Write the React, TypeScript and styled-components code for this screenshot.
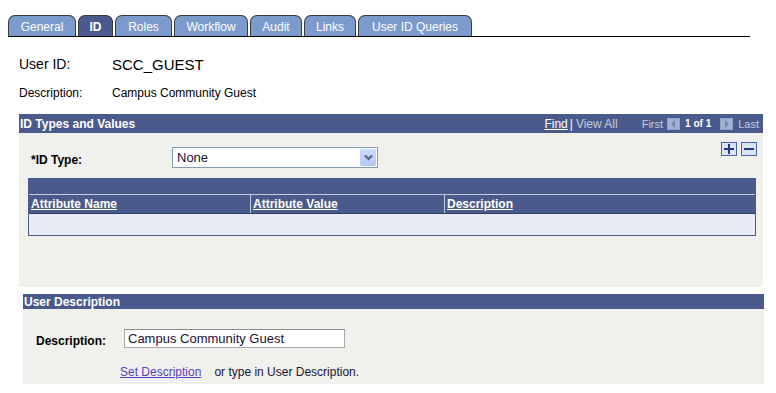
import React from "react";
import styled, { createGlobalStyle } from "styled-components";

const GlobalStyle = createGlobalStyle`
  body {
    margin: 0;
    background: #ffffff;
    font-family: "Liberation Sans", Arial, sans-serif;
    font-size: 12px;
    color: #000;
  }
`;

const HEADER_BLUE = "#4a5a8c";
const PANEL_BG = "#f0f1ec";

const Page = styled.div`
  width: 776px;
  height: 393px;
  overflow: hidden;
`;

const TabBar = styled.div`
  display: flex;
  gap: 2px;
  margin: 15px 0 0 8px;
  width: 742px;
  border-bottom: 1px solid #000;
`;

const Tab = styled.div<{ $active?: boolean; $w: number }>`
  width: ${(p) => p.$w}px;
  height: 21px;
  box-sizing: border-box;
  display: flex;
  align-items: center;
  justify-content: center;
  background: ${(p) => (p.$active ? HEADER_BLUE : "#7b9bcd")};
  color: #fff;
  font-size: 12px;
  font-weight: ${(p) => (p.$active ? "bold" : "normal")};
  border: 1px solid #3a3a3a;
  border-bottom: none;
  border-radius: 7px 7px 0 0;
  padding-top: 1px;
`;

const InfoRow = styled.div<{ $h: number; $top: number }>`
  display: flex;
  align-items: center;
  height: ${(p) => p.$h}px;
  margin: ${(p) => p.$top}px 0 0 19px;
`;

const InfoLabel = styled.span<{ $size: number }>`
  width: 93px;
  font-size: ${(p) => p.$size}px;
  color: #000;
`;

const InfoValue = styled.span<{ $size: number }>`
  font-size: ${(p) => p.$size}px;
  color: #000;
`;

const Section = styled.div<{ $left: number; $w: number; $top: number }>`
  margin: ${(p) => p.$top}px 0 0 ${(p) => p.$left}px;
  width: ${(p) => p.$w}px;
`;

const SectionHeader = styled.div<{ $h: number }>`
  height: ${(p) => p.$h}px;
  background: ${HEADER_BLUE};
  color: #fff;
  display: flex;
  align-items: center;
  justify-content: space-between;
  padding: 0 4px 0 1px;
  font-weight: bold;
  font-size: 12px;
`;

const Nav = styled.div`
  display: flex;
  align-items: center;
  font-weight: normal;
  color: #c5ccdb;
`;

const NavLink = styled.span`
  color: #fff;
  text-decoration: underline;
`;

const NavSep = styled.span`
  color: #fff;
  margin: 0 3px 0 2px;
`;

const NavCount = styled.span`
  color: #fff;
  font-weight: bold;
  font-size: 10px;
  margin: 0 5px;
`;

const NavIcon = styled.svg`
  display: block;
  margin-left: 4px;
`;

const NavWord = styled.span<{ $gap?: number }>`
  margin-left: ${(p) => p.$gap || 0}px;
  font-size: 11px;
`;

const PanelBody = styled.div<{ $h: number }>`
  background: ${PANEL_BG};
  height: ${(p) => p.$h}px;
  box-sizing: border-box;
`;

const TypeRow = styled.div`
  display: flex;
  justify-content: space-between;
  align-items: flex-start;
  padding: 9px 6px 0 12px;
`;

const FieldGroup = styled.div`
  display: flex;
  align-items: center;
  margin-top: 5px;
`;

const FieldLabel = styled.span<{ $w: number }>`
  width: ${(p) => p.$w}px;
  font-weight: bold;
  font-size: 12px;
  padding-top: 4px;
`;

const Select = styled.div`
  width: 206px;
  height: 21px;
  box-sizing: border-box;
  border: 1px solid #7f9db9;
  background: #fff;
  display: flex;
  align-items: center;
  justify-content: space-between;
  padding: 0 1px 0 4px;
  font-size: 13px;
  color: #1c1238;
`;

const SelectArrow = styled.div`
  width: 16px;
  height: 17px;
  border-radius: 2px;
  background: linear-gradient(#cbd9fc, #b4c7f5);
  display: flex;
  align-items: center;
  justify-content: center;
`;

const IconButtons = styled.div`
  display: flex;
  gap: 4px;
`;

const Grid = styled.div`
  margin: 10px 7px 0 9px;
  border: 1px solid ${HEADER_BLUE};
  border-top-width: 0;
`;

const GridTopBand = styled.div`
  height: 16px;
  background: ${HEADER_BLUE};
`;

const GridRow = styled.div<{ $head?: boolean }>`
  display: grid;
  grid-template-columns: 221px 194px 1fr;
  height: ${(p) => (p.$head ? 19 : 22)}px;
  box-sizing: border-box;
  background: ${(p) => (p.$head ? HEADER_BLUE : "#e6ebf5")};
  border-top: 1px solid ${(p) => (p.$head ? "#c4cce4" : "#2f3c68")};
`;

const HeadCell = styled.div<{ $sep?: boolean }>`
  border-left: ${(p) => (p.$sep ? "1px solid #c4cce4" : "none")};
  padding-left: 2px;
  display: flex;
  align-items: center;
  color: #fff;
  font-weight: bold;
  text-decoration: underline;
  font-size: 12px;
`;

const FormRow = styled.div`
  display: flex;
  align-items: center;
  padding: 20px 0 0 13px;
`;

const TextInput = styled.div`
  width: 221px;
  height: 19px;
  box-sizing: border-box;
  border: 1px solid #a9a9a9;
  border-top-color: #8a8a8a;
  background: #fff;
  display: flex;
  align-items: center;
  padding-left: 3px;
  font-size: 13px;
  color: #1c1238;
`;

const HelpRow = styled.div`
  display: flex;
  align-items: center;
  padding: 17px 0 0 97px;
  font-size: 12px;
  color: #1c1238;
`;

const TextLink = styled.a`
  color: #5a3cc8;
  text-decoration: underline;
  margin-right: 13px;
  cursor: pointer;
`;

const PlusMinus = ({ minus }: { minus?: boolean }) => (
  <svg width="16" height="14" viewBox="0 0 16 14">
    <rect x="0.5" y="0.5" width="15" height="13" fill="#dbe4f8" stroke="#4b63b6" />
    <rect x="3" y="6" width="10" height="2" fill="#25397f" />
    {!minus && <rect x="7" y="2" width="2" height="10" fill="#25397f" />}
  </svg>
);

const ArrowBox = ({ right }: { right?: boolean }) => (
  <NavIcon width="13" height="12" viewBox="0 0 13 12">
    <rect width="13" height="12" fill="#8fa3c6" />
    <rect x="1" y="1" width="11" height="10" fill="#9fb2d2" />
    {right ? (
      <polygon points="5,2 9,6 5,10" fill="#6f86b0" />
    ) : (
      <polygon points="8,2 4,6 8,10" fill="#6f86b0" />
    )}
  </NavIcon>
);

const tabs = [
  { label: "General", w: 68 },
  { label: "ID", w: 35, active: true },
  { label: "Roles", w: 57 },
  { label: "Workflow", w: 74 },
  { label: "Audit", w: 52 },
  { label: "Links", w: 52 },
  { label: "User ID Queries", w: 114 },
];

const App: React.FC = () => {
  return (
    <Page>
      <GlobalStyle />
      <TabBar>
        {tabs.map((t) => (
          <Tab key={t.label} $w={t.w} $active={t.active}>
            {t.label}
          </Tab>
        ))}
      </TabBar>

      <InfoRow $h={18} $top={18}>
        <InfoLabel $size={14}>User ID:</InfoLabel>
        <InfoValue $size={15}>SCC_GUEST</InfoValue>
      </InfoRow>
      <InfoRow $h={16} $top={12}>
        <InfoLabel $size={12}>Description:</InfoLabel>
        <InfoValue $size={12}>Campus Community Guest</InfoValue>
      </InfoRow>

      <Section $left={19} $w={744} $top={13}>
        <SectionHeader $h={19}>
          <span>ID Types and Values</span>
          <Nav>
            <NavLink>Find</NavLink>
            <NavSep>|</NavSep>
            <span>View All</span>
            <NavWord $gap={24}>First</NavWord>
            <ArrowBox />
            <NavCount>1 of 1</NavCount>
            <ArrowBox right />
            <NavWord $gap={5}>Last</NavWord>
          </Nav>
        </SectionHeader>
        <PanelBody $h={154}>
          <TypeRow>
            <FieldGroup>
              <FieldLabel $w={141}>*ID Type:</FieldLabel>
              <Select>
                <span>None</span>
                <SelectArrow>
                  <svg width="9" height="7" viewBox="0 0 9 7">
                    <polyline points="1,1.5 4.5,5 8,1.5" fill="none" stroke="#4d6185" strokeWidth="2" />
                  </svg>
                </SelectArrow>
              </Select>
            </FieldGroup>
            <IconButtons>
              <PlusMinus />
              <PlusMinus minus />
            </IconButtons>
          </TypeRow>
          <Grid>
            <GridTopBand />
            <GridRow $head>
              <HeadCell>Attribute Name</HeadCell>
              <HeadCell $sep>Attribute Value</HeadCell>
              <HeadCell $sep>Description</HeadCell>
            </GridRow>
            <GridRow />
          </Grid>
        </PanelBody>
      </Section>

      <Section $left={23} $w={741} $top={7}>
        <SectionHeader $h={15}>
          <span>User Description</span>
        </SectionHeader>
        <PanelBody $h={75}>
          <FormRow>
            <FieldLabel $w={88}>Description:</FieldLabel>
            <TextInput>Campus Community Guest</TextInput>
          </FormRow>
          <HelpRow>
            <TextLink>Set Description</TextLink>
            <span>or type in User Description.</span>
          </HelpRow>
        </PanelBody>
      </Section>
    </Page>
  );
};

export default App;
